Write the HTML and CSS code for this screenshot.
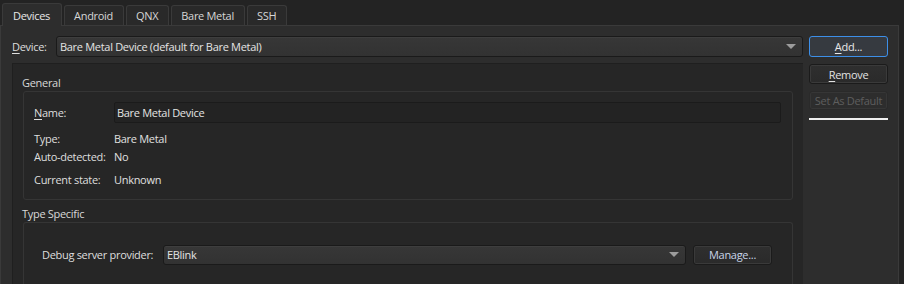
FILE: index.html
```html
<!DOCTYPE html>
<html>
<head>
<meta charset="utf-8">
<link rel="stylesheet" href="styles.css">
</head>
<body>
<div class="tabs">
  <div class="tab active">Devices</div>
  <div class="tab">Android</div>
  <div class="tab">QNX</div>
  <div class="tab">Bare Metal</div>
  <div class="tab">SSH</div>
</div>
<div class="pane">
  <div class="left">
    <div class="device-row">
      <span class="label"><u>D</u>evice:</span>
      <div class="combo main-combo">
        <span>Bare Metal Device (default for Bare Metal)</span>
        <span class="arrow"></span>
      </div>
    </div>
    <div class="scroll">
      <div class="group-title">General</div>
      <div class="group general">
        <div class="row name-row">
          <span class="label"><u>N</u>ame:</span>
          <div class="field">Bare Metal Device</div>
        </div>
        <div class="row info-row type-row">
          <span class="label">Type:</span>
          <span class="value">Bare Metal</span>
        </div>
        <div class="row info-row">
          <span class="label">Auto-detected:</span>
          <span class="value">No</span>
        </div>
        <div class="row info-row state-row">
          <span class="label">Current state:</span>
          <span class="value">Unknown</span>
        </div>
      </div>
      <div class="group-title">Type Specific</div>
      <div class="group specific">
        <div class="debug-row">
          <span class="label">Debug server provider:</span>
          <div class="combo debug-combo">
            <span>EBlink</span>
            <span class="arrow"></span>
          </div>
          <div class="button manage">Manage...</div>
        </div>
      </div>
    </div>
  </div>
  <div class="right">
    <div class="button focus"><u>A</u>dd...</div>
    <div class="button"><u>R</u>emove</div>
    <div class="button disabled">Set As Default</div>
    <div class="sep"></div>
  </div>
</div>
</body>
</html>
```

FILE: styles.css
```css
html, body {
  margin: 0;
  padding: 0;
  height: 100%;
  overflow: hidden;
}
body {
  background: #232323;
  color: #dedede;
  font-family: "Open Sans", "Noto Sans", sans-serif;
  font-size: 11px;
  letter-spacing: -0.3px;
}
u {
  text-decoration: underline;
  text-underline-offset: 2px;
}
.tabs {
  display: flex;
  align-items: flex-end;
  gap: 2px;
  height: 25px;
  padding-left: 2px;
}
.tab {
  box-sizing: border-box;
  height: 20px;
  padding: 0 10px 0 9px;
  display: flex;
  align-items: center;
  border: 1px solid #3a3a3a;
  border-bottom: none;
  border-radius: 3px 3px 0 0;
  background: #292929;
  color: #d6d6d6;
}
.tab.active {
  height: 23px;
  padding: 0 11px 0 10px;
  margin-bottom: -1px;
  background: #2d2d2d;
  position: relative;
  z-index: 1;
  color: #e8e8e8;
}
.pane {
  box-sizing: border-box;
  width: 899px;
  height: 270px;
  border: 1px solid #3a3a3a;
  background: #2d2d2d;
  display: grid;
  grid-template-columns: 792px 79px;
  column-gap: 6px;
  padding: 10px 0 0 10px;
}
.left {
  display: flex;
  flex-direction: column;
  gap: 6px;
  min-height: 0;
}
.device-row {
  display: flex;
  align-items: center;
  height: 21px;
  padding-left: 1px;
}
.device-row .label {
  width: 44px;
}
.combo {
  box-sizing: border-box;
  display: flex;
  align-items: center;
  justify-content: space-between;
  height: 21px;
  padding: 0 6px 0 3px;
  border: 1px solid #1a1a1a;
  border-radius: 3px;
  background: linear-gradient(#373737, #323232);
  box-shadow: inset 0 1px 0 #3e3e3e;
  color: #e4e4e4;
}
.main-combo {
  width: 747px;
}
.arrow {
  width: 0;
  height: 0;
  border-left: 5px solid transparent;
  border-right: 5px solid transparent;
  border-top: 5px solid #9c9c9c;
}
.scroll {
  flex: 1;
  box-sizing: border-box;
  background: #262626;
  border-top: 1px solid #1f1f1f;
  border-left: 1px solid #1f1f1f;
  padding: 10px 10px 0 9px;
  margin-left: 1px;
}
.group-title {
  height: 17px;
  line-height: 17px;
  color: #d8d8d8;
}
.group {
  box-sizing: border-box;
  border: 1px solid #353535;
  border-radius: 3px;
  margin-left: 1px;
}
.general {
  display: flex;
  flex-direction: column;
  padding: 10px 11px 11px 10px;
  margin-bottom: 5px;
}
.row {
  display: flex;
  align-items: center;
}
.row .label {
  width: 80px;
  flex: none;
}
.name-row {
  height: 21px;
}
.info-row {
  height: 18px;
}
.type-row {
  margin-top: 6px;
}
.state-row {
  margin-top: 5px;
}
.value {
  color: #e0e0e0;
}
.field {
  box-sizing: border-box;
  flex: 1;
  height: 21px;
  display: flex;
  align-items: center;
  padding-left: 2px;
  border: 1px solid #1b1b1b;
  border-radius: 2px;
  background: #232323;
  color: #e4e4e4;
}
.specific {
  border-bottom: none;
  border-radius: 3px 3px 0 0;
  height: 70px;
  padding: 20px 0 0 18px;
}
.debug-row {
  display: flex;
  align-items: center;
  height: 21px;
  margin-top: 1px;
}
.debug-row .label {
  width: 121px;
}
.debug-combo {
  width: 523px;
  height: 20px;
}
.button {
  box-sizing: border-box;
  height: 20px;
  display: flex;
  align-items: center;
  justify-content: center;
  border: 1px solid #1b1b1b;
  border-radius: 3px;
  background: linear-gradient(#2f2f2f, #2a2a2a);
  box-shadow: inset 0 0 0 1px #3a3a3a;
  color: #e2e2e2;
}
.manage {
  width: 79px;
  margin-left: 7px;
  height: 20px;
  color: #c8d4e8;
}
.right {
  display: flex;
  flex-direction: column;
  gap: 7px;
}
.right .button {
  height: 20px;
}
.button.focus {
  height: 21px;
  border: 1px solid #3d8fe8;
  box-shadow: none;
  background: #363a40;
  color: #e8e8e8;
}
.button.disabled {
  height: 19px;
  border-color: #2a2a2a;
  box-shadow: inset 0 0 0 1px #363636;
  background: #2d2d2d;
  color: #5e5e5e;
}
.sep {
  height: 2px;
  background: #f0f0f0;
  margin-top: 1px;
}
```
